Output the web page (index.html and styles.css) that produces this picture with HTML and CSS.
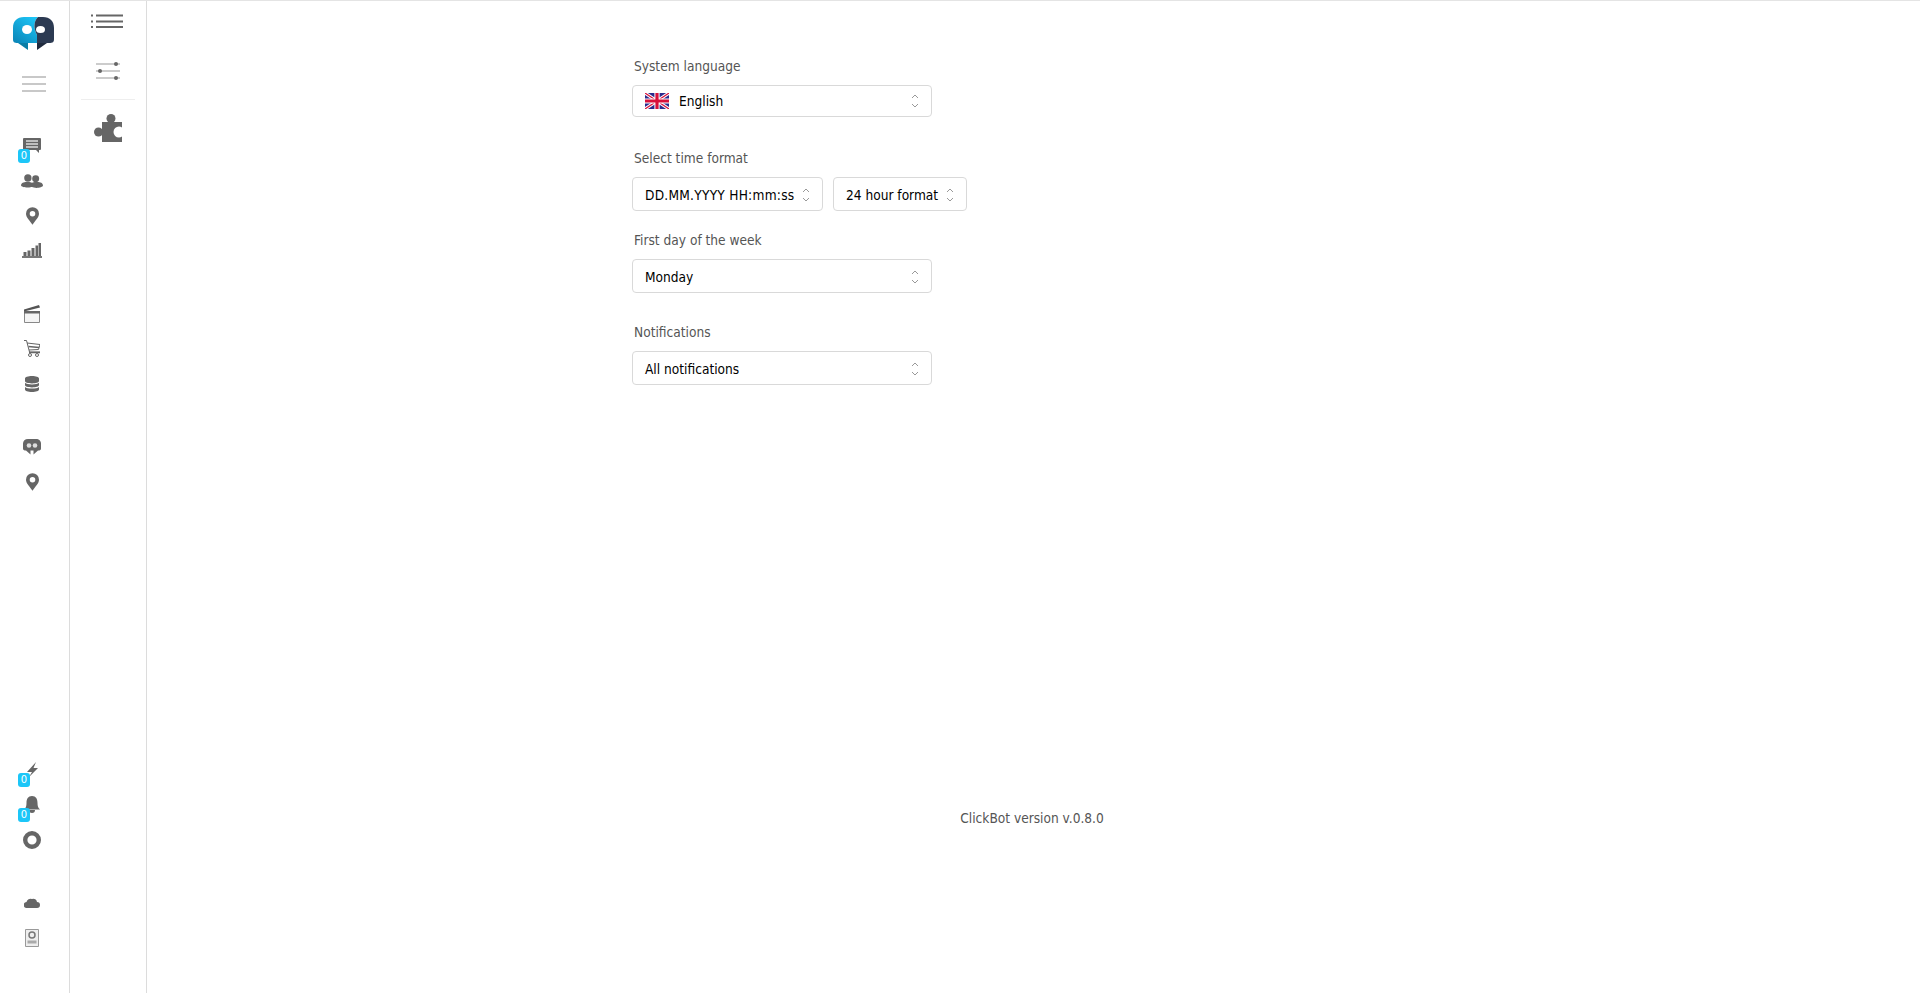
FILE: index.html
```html
<!DOCTYPE html>
<html lang="en">
<head>
<meta charset="utf-8">
<title>ClickBot settings</title>
<link rel="stylesheet" href="styles.css">
</head>
<body>
<div class="app">
  <aside class="rail">
    <a class="logo">
      <svg width="41" height="34" viewBox="0 0 41 34">
        <defs><linearGradient id="lg" x1="0.1" y1="1" x2="0.8" y2="0"><stop offset="0" stop-color="#0a86b8"/><stop offset="1" stop-color="#1cc4f6"/></linearGradient></defs>
        <path d="M25 0H11C4 0 0 4 0 11v11c0 3 1 4 5 4h19V18C21 12 20 5 25 0z" fill="url(#lg)"/>
        <path d="M25 0h5c7 0 11 4 11 11v11c0 3-1 4-5 4H24V18C21 12 20 5 25 0z" fill="#2c3a52"/>
        <path d="M5 26h10v7z" fill="#0a7da6"/>
        <path d="M24 26h10l-10 7z" fill="#1f2a3d"/>
        <ellipse cx="14" cy="12.500" rx="5" ry="4.500" fill="#fff"/>
        <ellipse cx="27.500" cy="12.500" rx="4.500" ry="3.500" fill="#fff"/>
      </svg>
    </a>
    <div class="burger"><i></i><i></i><i></i></div>
    <nav class="rail-nav">
      <div class="group">
        <a class="item"><svg width="18" height="15" viewBox="0 0 18 15"><path d="M1 0h16a1 1 0 0 1 1 1v10a1 1 0 0 1-1 1h-1v3l-3-3H1a1 1 0 0 1-1-1V1a1 1 0 0 1 1-1z" fill="#666"/><path d="M3 3h12M3 6h12M3 9h12" stroke="#ddd" stroke-width="1.300"/></svg><span class="badge">0</span></a>
        <a class="item"><svg width="22" height="14" viewBox="0 0 24 15"><circle cx="7.500" cy="4.200" r="4" fill="#666"/><circle cx="16" cy="5" r="3.800" fill="#666"/><path d="M0 12.500c0-3 3-4 6-4h3c2 0 3 1 3 1s1-1 3-1h3c3 0 6 1 6 4 0 1.500-4 2.500-7 2.500-2 0-4-1-5-1s-2 .5-5 .5c-3 0-7-1-7-2.500z" fill="#666"/></svg></a>
        <a class="item"><svg width="13" height="18" viewBox="0 0 14 19"><path d="M7 0a7 7 0 0 1 7 7c0 4-4 7-7 12C4 14 0 11 0 7a7 7 0 0 1 7-7zm0 4a3 3 0 1 0 0 6 3 3 0 0 0 0-6z" fill="#666"/></svg></a>
        <a class="item"><svg width="20" height="15" viewBox="0 0 20 15"><path d="M1.500 9h3v4h-3zM5.500 7.500h3V13h-3zM9.500 5h3v8h-3zM13.500 2.500h2.500V13h-2.500zM16.500 0H19v13h-2.500z" fill="#666"/><path d="M0 14h20" stroke="#777" stroke-width="2"/></svg></a>
      </div>
      <div class="group">
        <a class="item"><svg width="16" height="18" viewBox="0 0 16 18"><path d="M0 4.500 15 0l1 2.500-16 4z" fill="#555"/><path d="M.5 7h15v10.500H.5z" fill="#f4f4f4" stroke="#888"/><path d="M0 6h16v2.500H0z" fill="#666"/></svg></a>
        <a class="item"><svg width="16" height="17" viewBox="0 0 16 17" fill="none" stroke="#666"><path d="M0 .5h2.500l3 11.500H16"/><path d="M3 3l13 1.500-1.500 5L5 10"/><path d="M4.500 6.500l10.500 1M5 12.500h11" stroke-width="1.400"/><circle cx="6" cy="15" r="1.500"/><circle cx="13" cy="15" r="1.500"/></svg></a>
        <a class="item"><svg width="14" height="16" viewBox="0 0 14 16"><path d="M0 2.500C0 1 3 0 7 0s7 1 7 2.500V5c0 1.500-3 2.400-7 2.400S0 6.500 0 5zM0 6.800c1 1 4 1.700 7 1.700s6-.7 7-1.700V9c0 1.500-3 2.400-7 2.400S0 10.500 0 9zM0 11c1 1 4 1.600 7 1.600s6-.6 7-1.600v2.500C14 15 11 16 7 16s-7-1-7-2.500z" fill="#666"/></svg></a>
      </div>
      <div class="group">
        <a class="item"><svg width="18" height="16" viewBox="0 0 18 16"><path d="M5 0h8c3 0 5 2 5 4.500v5c0 1.500-1 2-3 2l-4.500 4v-4h-3v4L3 11.500c-2 0-3-.5-3-2v-5C0 2 2 0 5 0z" fill="#666"/><ellipse cx="6" cy="6.500" rx="2.300" ry="2.300" fill="#ddd"/><ellipse cx="12" cy="6.500" rx="2.300" ry="2.300" fill="#ddd"/></svg></a>
        <a class="item"><svg width="13" height="18" viewBox="0 0 14 19"><path d="M7 0a7 7 0 0 1 7 7c0 4-4 7-7 12C4 14 0 11 0 7a7 7 0 0 1 7-7zm0 4a3 3 0 1 0 0 6 3 3 0 0 0 0-6z" fill="#666"/></svg></a>
      </div>
      <div class="group bottom">
        <a class="item"><svg width="12" height="15" viewBox="0 0 12 15"><path d="M9 0 0 10h5l-3 5 9-9H6.500z" fill="#666" transform="translate(1 0)"/></svg><span class="badge">0</span></a>
        <a class="item"><svg width="16" height="18" viewBox="0 0 16 18"><path d="M8 0c4 0 5.500 3 5.500 7 0 3 .5 5 2.500 6.500H0C2 12 2.500 10 2.500 7 2.500 3 4 0 8 0z" fill="#666"/><path d="M5 14h6a3 3 0 0 1-6 0z" fill="#666"/></svg><span class="badge">0</span></a>
        <a class="item"><svg width="18" height="18" viewBox="0 0 18 18"><circle cx="9" cy="9" r="6.800" fill="#fff" stroke="#666" stroke-width="4.400"/></svg></a>
      </div>
      <div class="group">
        <a class="item"><svg width="16" height="10" viewBox="0 0 16 10"><path d="M3 10a3 3 0 0 1-.5-6A4 4 0 0 1 8 1a3.500 3.500 0 0 1 5 3 3 3 0 0 1 0 6z" fill="#666"/></svg></a>
        <a class="item"><svg width="14" height="18" viewBox="0 0 14 18"><path d="M.5.5h13v17H.5z" fill="#eee" stroke="#999"/><circle cx="7" cy="6" r="3" fill="none" stroke="#777" stroke-width="1.500"/><path d="M2.500 11.500h9v3h-9z" fill="#aaa"/></svg></a>
      </div>
    </nav>
  </aside>
  <aside class="subrail">
    <a class="sub-top">
      <svg width="32" height="14" viewBox="0 0 32 14"><path d="M5 1.500h27M5 7.500h27M5 13h27" stroke="#666" stroke-width="1.800"/><path d="M0 .5h2v2H0zM0 6.500h2v2H0zM0 12h2v2H0z" fill="#666"/></svg>
    </a>
    <a class="sub-item">
      <svg width="24" height="18" viewBox="0 0 24 18"><path d="M0 2h24M0 9h24M0 16h24" stroke="#999" stroke-width="1.200"/><circle cx="20" cy="2" r="2" fill="#666"/><circle cx="4" cy="9" r="2" fill="#666"/><circle cx="20" cy="16" r="2" fill="#666"/></svg>
    </a>
    <div class="sub-divider"></div>
    <a class="sub-active">
      <svg width="28" height="28" viewBox="0 0 28 28"><path d="M8 8h20v20H8z" fill="#666"/><circle cx="17" cy="4.500" r="4.500" fill="#666"/><circle cx="4.500" cy="18" r="4.500" fill="#666"/><circle cx="25" cy="18" r="5.500" fill="#fff"/></svg>
    </a>
  </aside>
  <main class="main">
    <form class="form">
      <div class="field lang">
        <label class="label">System language</label>
        <div class="select wide short">
          <svg class="flag" width="24" height="16" viewBox="0 0 60 40"><path fill="#2a2a8c" d="M0 0h60v40H0z"/><path d="M0 0l60 40M60 0 0 40" stroke="#fff" stroke-width="8"/><path d="M0 0l60 40M60 0 0 40" stroke="#d8103a" stroke-width="3"/><path d="M30 0v40M0 20h60" stroke="#fff" stroke-width="13"/><path d="M30 0v40M0 20h60" stroke="#d8103a" stroke-width="8"/></svg>
          <span class="value">English</span>
          <svg class="chev" width="8" height="14" viewBox="0 0 8 14"><path d="M1 4 4 1l3 3M1 10l3 3 3-3" fill="none" stroke="#999"/></svg>
        </div>
      </div>
      <div class="field time">
        <label class="label">Select time format</label>
        <div class="row">
          <div class="select date"><span class="value">DD.MM.YYYY HH:mm:ss</span><svg class="chev" width="8" height="14" viewBox="0 0 8 14"><path d="M1 4 4 1l3 3M1 10l3 3 3-3" fill="none" stroke="#999"/></svg></div>
          <div class="select hours"><span class="value">24 hour format</span><svg class="chev" width="8" height="14" viewBox="0 0 8 14"><path d="M1 4 4 1l3 3M1 10l3 3 3-3" fill="none" stroke="#999"/></svg></div>
        </div>
      </div>
      <div class="field week">
        <label class="label">First day of the week</label>
        <div class="select wide"><span class="value">Monday</span><svg class="chev" width="8" height="14" viewBox="0 0 8 14"><path d="M1 4 4 1l3 3M1 10l3 3 3-3" fill="none" stroke="#999"/></svg></div>
      </div>
      <div class="field notif">
        <label class="label">Notifications</label>
        <div class="select wide"><span class="value">All notifications</span><svg class="chev" width="8" height="14" viewBox="0 0 8 14"><path d="M1 4 4 1l3 3M1 10l3 3 3-3" fill="none" stroke="#999"/></svg></div>
      </div>
    </form>
    <footer class="version">ClickBot version v.0.8.0</footer>
  </main>
</div>
</body>
</html>
```
FILE: styles.css
```css
* { box-sizing: border-box; }
html, body { margin: 0; height: 100%; background: #fff; overflow: hidden; }
body { font-family: "DejaVu Sans", sans-serif; font-stretch: condensed; font-size: 13.6px; color: #555; }
.app { display: flex; height: 993px; border-top: 1px solid #e4e4e4; }
.rail { width: 70px; flex: none; border-right: 1px solid #dcdcdc; display: flex; flex-direction: column; padding: 16px 0 38px; }
.logo { display: block; height: 34px; margin-left: 13px; }
.logo svg { display: block; }
.burger { width: 24px; margin: 25px 0 0 22px; display: flex; flex-direction: column; gap: 5px; }
.burger i { display: block; height: 2px; background: #c8c8c8; }
.rail-nav { flex: 1; width: 100%; display: flex; flex-direction: column; padding-top: 36px; }
.group { margin-bottom: 28px; }
.group.bottom { margin-top: auto; }
.group:last-child { margin-bottom: 0; }
.item { position: relative; display: flex; align-items: center; justify-content: center; height: 35px; padding-right: 5px; }
.badge { position: absolute; left: 18px; top: 21px; width: 12px; height: 14px; border-radius: 3px; background: #1cc6f8; color: #fff; font: 10px/14px "DejaVu Sans", sans-serif; text-align: center; }
.subrail { width: 77px; flex: none; border-right: 1px solid #dcdcdc; display: flex; flex-direction: column; padding-top: 13px; }
.sub-top { height: 14px; display: block; margin-left: 21px; }
.sub-top svg, .sub-item svg, .sub-active svg { display: block; }
.sub-item { margin: 34px 0 0 26px; height: 18px; display: block; }
.sub-divider { width: 54px; height: 1px; background: #eee; margin: 19px 0 0 11px; }
.sub-active { margin: 14px 0 0 24px; display: block; height: 28px; }
.main { flex: 1; display: flex; flex-direction: column; }
.form { padding: 55px 0 0 485px; }
.label { display: block; margin-left: 2px; line-height: 20px; color: #555; }
.field.time { margin-top: 31px; }
.field.notif { margin-top: 29px; }
.field.week { margin-top: 19px; }
.select { display: flex; align-items: center; height: 34px; border: 1px solid #d9d9d9; border-radius: 4px; padding: 1px 12px 0 12px; margin-top: 9px; color: #000; background: #fff; }
.select.short { height: 32px; padding-top: 0; }
.select.wide { width: 300px; }
.select .chev { margin-left: auto; flex: none; }
.flag { margin-right: 10px; flex: none; }
.row { display: flex; gap: 10px; }
.select.date { width: 191px; }
.select.date .value { letter-spacing: 0.25px; }
.select.hours { width: 134px; }
.value { white-space: nowrap; }
.version { margin-top: 423px; padding-right: 3px; text-align: center; color: #555; line-height: 20px; }
```
